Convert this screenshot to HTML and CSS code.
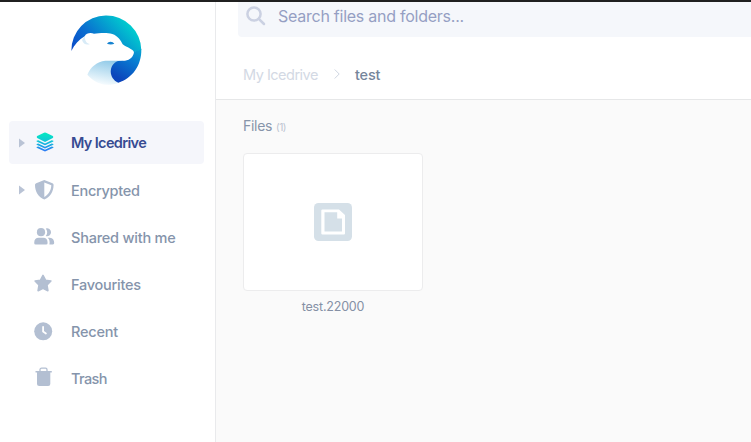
FILE: index.html
```html
<!DOCTYPE html>
<html lang="en">
<head>
<meta charset="utf-8">
<title>Icedrive</title>
<link rel="stylesheet" href="styles.css">
</head>
<body>
<div class="app">
  <aside class="sidebar">
    <svg class="logo" viewBox="30 42 219 216" aria-hidden="true">
      <defs>
        <linearGradient id="ring" gradientUnits="userSpaceOnUse" x1="80" y1="200" x2="215" y2="75"><stop offset="0" stop-color="#0b49c8"/><stop offset=".4" stop-color="#096fd0"/><stop offset="1" stop-color="#00cfcf"/></linearGradient>
        <linearGradient id="lower" gradientUnits="userSpaceOnUse" x1="240" y1="130" x2="175" y2="235"><stop offset="0" stop-color="#05b3d0"/><stop offset=".45" stop-color="#087bd2"/><stop offset="1" stop-color="#0c45bb"/></linearGradient>
        <linearGradient id="neck" x1=".8" y1="0" x2=".5" y2="1"><stop offset="0" stop-color="#8dc8e7"/><stop offset="1" stop-color="#f5fbfe"/></linearGradient>
      </defs>
      <path fill="url(#neck)" d="M82 224C92 200 111 185 136 182H190L160 215L176 248C140 262 106 252 82 224Z"/>
      <path fill="url(#ring)" d="M34 153A105 105 0 0 1 244 150L222 157C219 147 201 143 188 133C183 122 174 108 157 102C139 97 116 100 102 101C92 97 78 99 74 109C57 119 43 135 34 153Z"/>
      <path fill="url(#lower)" d="M244 148C245 197 216 236 175 248C145 235 145 194 174 183L195 182C211 180 221 169 222 155Z"/>
      <path fill="#d8ebf7" d="M66 120C70 133 80 136 90 132C80 131 75 124 74 109Z"/>
      <path fill="#1683d0" d="M141 131C145 123 158 123 163 131C157 134 148 134 141 131Z"/>
    </svg>
    <nav class="nav">
      <a class="item active">
        <svg class="caret" viewBox="0 0 6 10"><path d="M0 .5L6 5L0 9.500Z"/></svg>
        <svg class="icon stack" viewBox="0 0 20 20"><defs><linearGradient id="stack" gradientUnits="userSpaceOnUse" x1="0" y1="2" x2="0" y2="19"><stop stop-color="#05e5c3"/><stop offset=".45" stop-color="#12c4d8"/><stop offset="1" stop-color="#2b79f5"/></linearGradient></defs><g fill="url(#stack)"><path d="M10 .7Q11 .3 12 .7L18.800 4Q19.800 5 18.800 6L11 9.900L3.200 6Q2.200 5 3.200 4Z"/><path d="M2.600 8.700L4.300 8.200L11 11.400L17.700 8.200L19.400 8.700V9.500L11 13.300L2.600 9.500Z"/><path d="M2.600 11.900L4.300 11.400L11 14.700L17.700 11.400L19.400 11.900V12.700L11 16.500L2.600 12.700Z"/><path d="M2.600 15L4.300 14.500L11 17.700L17.700 14.500L19.400 15V15.800L11 19.600L2.600 15.800Z"/></g></svg>
        <span class="label">My Icedrive</span>
      </a>
      <a class="item">
        <svg class="caret" viewBox="0 0 6 10"><path d="M0 .5L6 5L0 9.500Z"/></svg>
        <svg class="icon" viewBox="0 0 20 20"><path fill-rule="evenodd" d="M10.300 0L18.500 3.300Q19.700 3.800 19.600 5C19.500 12 16 17 10.300 19.600C4.600 17 1 12 1 5Q.9 3.800 2.200 3.300ZM10.300 2.600V17C14.700 14.500 17.100 10.500 17.300 5.300Z"/></svg>
        <span class="label encrypted">Encrypted</span>
      </a>
      <a class="item">
        <span class="caret"></span>
        <svg class="icon wide" viewBox="0 0 22 20"><circle cx="7" cy="5.200" r="4.100"/><path d="M11.800 1.400A4 4 0 1 1 11.800 9Q14.600 5.300 11.800 1.400ZM.2 15.900C.2 12.500 1.900 10.800 4.700 10.800H9.300C12.100 10.800 13.600 12.500 13.600 15.900Q13.600 17.400 12.100 17.400H1.700Q.2 17.400 .2 15.900ZM13.600 10.800H15.900C18.800 10.800 20.200 13 20.200 16.100Q20.200 17.400 18.900 17.400H15.400C16 14.700 15.600 12.500 13.600 10.800Z"/></svg>
        <span class="label shared">Shared with me</span>
      </a>
      <a class="item">
        <span class="caret"></span>
        <svg class="icon" viewBox="0 0 20 20"><path stroke="#b3bfd2" stroke-width="1.600" stroke-linejoin="round" d="M9 1.400L11.500 6.200L16.900 7L13 11L13.900 16.700L9 14.200L4.100 16.700L5 11L1.100 7L6.500 6.200Z"/></svg>
        <span class="label favourites">Favourites</span>
      </a>
      <a class="item">
        <span class="caret"></span>
        <svg class="icon" viewBox="0 0 20 20"><circle cx="9.200" cy="10.300" r="9"/><path fill="none" stroke="#fff" stroke-width="1.800" stroke-linecap="round" d="M9.100 5.800V10.600L11.900 12.600"/></svg>
        <span class="label recent">Recent</span>
      </a>
      <a class="item">
        <span class="caret"></span>
        <svg class="icon" viewBox="0 0 20 20"><path d="M1.500 3H17.800V4.600H16.300V16Q16.300 18.100 14.200 18.100H5.200Q3 18.100 3 16V4.600H1.500Z"/><path fill="none" stroke="#b3bfd2" stroke-width="1.300" d="M6 3.400V1.800Q6 .2 7.600 .2H11.500Q13 .2 13 1.800V3.400"/></svg>
        <span class="label trash">Trash</span>
      </a>
    </nav>
  </aside>
  <main class="main">
    <header class="header">
      <div class="search">
        <svg class="glass" viewBox="0 0 20 20"><circle cx="8" cy="8" r="6.600"/><path d="M12.800 12.800L18 18"/></svg>
        <span class="placeholder">Search files and folders...</span>
      </div>
      <div class="crumbs">
        <span class="root">My Icedrive</span>
        <svg class="chevron" viewBox="0 0 6 10"><path d="M.7 .5L5.200 5L.7 9.500"/></svg>
        <span class="current">test</span>
      </div>
    </header>
    <section class="content">
      <h2 class="heading"><span class="title">Files</span><span class="count">(1)</span></h2>
      <figure class="file">
        <div class="card">
          <svg class="doc" viewBox="0 0 38 38"><rect width="38" height="38" rx="4.500" fill="#d5e0e8"/><path fill="#fff" fill-rule="evenodd" d="M8.500 6.500H25L31 12V30.500Q31 31.500 30 31.500H8.500Q7.300 31.500 7.300 30.500V7.500Q7.300 6.500 8.500 6.500ZM10.500 9.300V28.500H28V15.500H23.200V9.300Z"/></svg>
        </div>
        <figcaption class="name">test.22000</figcaption>
      </figure>
    </section>
  </main>
</div>
</body>
</html>
```
FILE: styles.css
```css
* { box-sizing: border-box; }
body { margin: 0; font-family: "Inter", "Liberation Sans", sans-serif; background: #fff; }
.app { display: flex; height: 442px; border-top: 2px solid #202020; overflow: hidden; }
.sidebar { width: 216px; flex: none; border-right: 1px solid #e9eaec; }
.logo { display: block; width: 73px; height: 72px; margin: 12px 0 0 70px; }
.nav { display: flex; flex-direction: column; gap: 4.200px; margin: 35px 11px 0 9px; }
.item { display: flex; align-items: center; height: 43px; padding-left: 10px; border-radius: 4px; color: #8594ab; font-size: 14.500px; font-weight: 500; }
.active { background: #f5f6fb; color: #374b92; }
.caret { width: 6px; height: 10px; margin-right: 9px; flex: none; fill: #b9c3d5; }
.icon { width: 20px; height: 20px; flex: none; fill: #b3bfd2; overflow: visible; margin-right: 17px; }
.stack { margin-bottom: 2px; }
.wide { width: 22px; margin-right: 15px; }
.label { padding-top: 1px; white-space: nowrap; letter-spacing: -.25px; }
.active .label { padding-top: 0; font-weight: 600; letter-spacing: -.65px; }
.encrypted { letter-spacing: -.28px; }
.shared { letter-spacing: -.22px; }
.recent { padding-top: 0; letter-spacing: -.22px; }
.trash { padding-top: 0; letter-spacing: -.6px; }
.main { flex: 1; min-width: 0; background: #fafafa; }
.header { height: 98px; background: #fff; border-bottom: 1px solid #e6e7e8; padding-left: 22px; }
.search { display: flex; align-items: flex-start; height: 35px; padding: 4px 0 0 8px; background: #f5f7fb; border-bottom-left-radius: 4px; }
.glass { width: 20px; height: 20px; fill: none; stroke: #cbd1e2; stroke-width: 2.500; stroke-linecap: round; }
.placeholder { margin-left: 12px; color: #959fc3; font-size: 16px; line-height: 20px; letter-spacing: -.25px; white-space: nowrap; }
.crumbs { display: flex; align-items: center; height: 20px; margin: 27px 0 0 5px; font-size: 14.500px; }
.root { width: 75px; color: #d3d9e4; letter-spacing: -.5px; white-space: nowrap; }
.chevron { width: 6px; height: 10px; margin: 0 15px 0 16px; fill: none; stroke: #ced6e1; stroke-width: 1; }
.current { color: #75859b; font-weight: 500; letter-spacing: -.2px; }
.content { padding: 16px 0 0 27px; }
.heading { display: flex; align-items: baseline; margin: 0; height: 20px; line-height: 20px; font-weight: 400; }
.title { font-size: 14px; letter-spacing: -.3px; color: #8795aa; }
.count { margin-left: 4px; font-size: 10px; letter-spacing: -.5px; color: #bac3d0; }
.file { width: 180px; margin: 17px 0 0; }
.card { display: flex; align-items: center; justify-content: center; height: 138px; border: 1px solid #ececed; border-radius: 4px; background: #fff; }
.doc { width: 38px; height: 38px; }
.name { margin-top: 6px; text-align: center; color: #8590a5; font-size: 12.500px; letter-spacing: -.2px; line-height: 20px; }
```
